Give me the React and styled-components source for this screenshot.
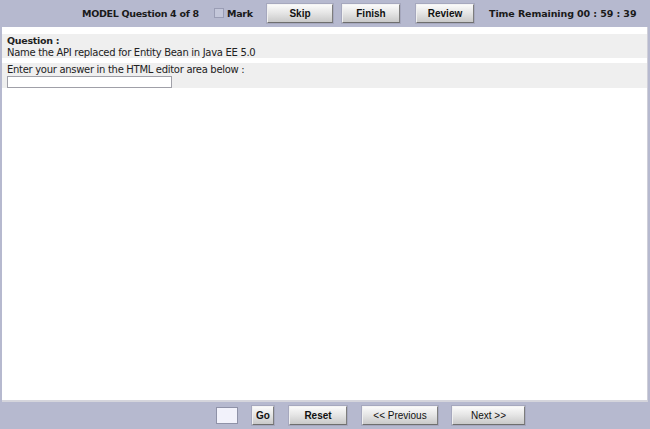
import React from 'react';
import styled, { createGlobalStyle } from 'styled-components';

const GlobalStyle = createGlobalStyle`
  html, body {
    margin: 0;
    padding: 0;
    background: #b6b9cf;
  }
`

const App = () => {
  return(
    <>
      <GlobalStyle />
      <Page>
        <TopBar>
          <Title>MODEL Question 4 of 8</Title>
          <MarkLabel>
            <CheckBox />
            Mark
          </MarkLabel>
          <Button w={66} ml={17}>Skip</Button>
          <Button w={58} ml={9}>Finish</Button>
          <Button w={58} ml={16}>Review</Button>
          <Timer>Time Remaining 00 : 59 : 39</Timer>
        </TopBar>
        <Main>
          <Band>
            <Label>Question :</Label>
            <Text>Name the API replaced for Entity Bean in Java EE 5.0</Text>
          </Band>
          <Band tall>
            <Text>Enter your answer in the HTML editor area below :</Text>
            <AnswerInput />
          </Band>
        </Main>
        <BottomBar>
          <PageBox />
          <Button w={22} ml={14}>Go</Button>
          <Button w={58} ml={15}>Reset</Button>
          <Button w={76} ml={15} light>&lt;&lt; Previous</Button>
          <Button w={73} ml={14} light>Next &gt;&gt;</Button>
        </BottomBar>
      </Page>
    </>
  );
}

const Page = styled.div`
  width: 650px;
  height: 429px;
  display: flex;
  flex-direction: column;
  background: #b6b9cf;
  font-family: Tahoma, "DejaVu Sans", sans-serif;
  color: #1a1a1a;
`

const TopBar = styled.div`
  height: 27px;
  display: flex;
  align-items: center;
  padding-left: 82px;
  padding-bottom: 1px;
  box-sizing: border-box;
  font-size: 9.5px;
  font-weight: bold;
  white-space: nowrap;
`

const Title = styled.span`
  flex: 0 0 113px;
  min-width: 0;
  letter-spacing: -0.3px;
`

const MarkLabel = styled.label`
  flex: 0 0 36px;
  min-width: 0;
  display: flex;
  align-items: center;
  margin-left: 19px;
  gap: 3px;
  letter-spacing: -0.3px;
`

const CheckBox = styled.span`
  flex: 0 0 auto;
  width: 8px;
  height: 8px;
  border: 1px solid #9a9db5;
  background: #c4c7da;
`

const Timer = styled.span`
  margin-left: 15px;
  letter-spacing: -0.1px;
`

const Button = styled.button`
  flex: 0 0 ${p => p.w}px;
  height: 19px;
  margin-left: ${p => p.ml}px;
  padding: 0;
  font-family: "Liberation Sans", Arial, sans-serif;
  font-size: 10px;
  font-weight: ${p => p.light ? 'normal' : 'bold'};
  color: #111;
  background: linear-gradient(#fafafa, #e6e6e6 45%, #c9c9c9);
  border: 1px solid;
  border-color: #f4f4f4 #7d7d7d #6e6e6e #f0f0f0;
  box-shadow: 0 0 0 1px rgba(120, 120, 140, 0.25);
`

const Main = styled.div`
  flex: 1;
  margin: 0 2px;
  background: #ffffff;
  border-right: 1px solid #cfcfd8;
  border-bottom: 2px solid #d5d5dc;
  padding-top: 7px;
`

const Band = styled.div`
  background: #efefef;
  height: ${p => p.tall ? 25 : 24}px;
  margin-bottom: 5px;
  padding: 1px 5px 0;
  box-sizing: border-box;
  font-size: 10px;
  line-height: 11px;
  letter-spacing: -0.3px;
  color: #222;
`

const Label = styled.div`
  font-weight: bold;
  font-size: 9.5px;
  line-height: 12px;
  letter-spacing: -0.3px;
`

const Text = styled.div`
  margin-top: 0;
`

const AnswerInput = styled.div`
  width: 163px;
  height: 10px;
  margin-top: 1px;
  background: #fff;
  border: 1px solid #a0a0a8;
`

const BottomBar = styled.div`
  height: 27px;
  display: flex;
  align-items: center;
  padding-left: 216px;
  box-sizing: border-box;
`

const PageBox = styled.div`
  width: 20px;
  height: 15px;
  background: #f2f2fb;
  border: 1px solid #8f92a8;
`

export default App;
